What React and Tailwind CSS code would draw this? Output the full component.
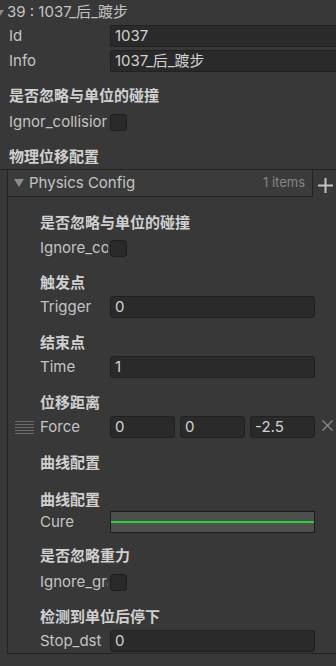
import React from 'react';

const labelCls = 'shrink-0 overflow-hidden whitespace-nowrap text-[15px] text-[#c4c4c4] leading-[22px]';
const fieldCls = 'h-[22px] rounded-[3px] border border-[#212121] bg-[#2a2a2a] pl-[4px] text-[15px] leading-[20px] text-[#d2d2d2] overflow-hidden whitespace-nowrap';

function Heading({ children, className }) {
  return (
    <div className={'h-[22px] font-bold text-[15px] leading-[22px] text-[#d0d0d0] ' + className}>
      {children}
    </div>
  );
}

function Checkbox() {
  return <div className="h-[17px] w-[17px] rounded-[3px] border border-[#1f1f1f] bg-[#2a2a2a]" />;
}

function Row({ label, labelW, children, className }) {
  return (
    <div className={'flex h-[22px] items-center ' + className}>
      <div className={labelCls + ' ' + labelW}>{label}</div>
      {children}
    </div>
  );
}

export default function App() {
  return (
    <div className="h-[666px] w-[336px] overflow-hidden bg-[#383838] font-[family-name:Inter,'Noto_Sans_CJK_SC',sans-serif]">
      {/* object title */}
      <div className="flex h-[25px] items-center">
        <svg width="4" height="8" viewBox="0 0 4 8" className="mt-[1px]">
          <path d="M-4 1 L4 1 L0 7 Z" fill="#8c8c8c" />
        </svg>
        <span className="ml-[3px] text-[15px] text-[#c4c4c4]">39 : 1037_后_踱步</span>
      </div>

      <div className="pl-[9px]">
        <Row label="Id" labelW="w-[101px]">
          <div className={fieldCls + ' flex-1 border-r-0 rounded-r-none'}>1037</div>
        </Row>
        <Row label="Info" labelW="w-[101px]" className="mt-[3px]">
          <div className={fieldCls + ' flex-1 border-r-0 rounded-r-none'}>1037_后_踱步</div>
        </Row>

        <Heading className="mt-[13px]">是否忽略与单位的碰撞</Heading>
        <Row label="Ignor_collisior" labelW="w-[98px] mr-[3px]" className="mt-[4px]">
          <Checkbox />
        </Row>

        <Heading className="mt-[13px]">物理位移配置</Heading>
      </div>

      {/* list header */}
      <div className="mt-[1px] flex h-[28px] border-t border-[#232323] pl-[7px]">
        <div className="flex w-[306px] items-center border-b border-l border-r border-[#232323] bg-[#3b3b3b]">
          <svg width="10" height="8" viewBox="0 0 10 8" className="ml-[6px]">
            <path d="M0 0 L10 0 L5 8 Z" fill="#8c8c8c" />
          </svg>
          <span className="ml-[5px] text-[15px] text-[#c4c4c4]">Physics Config</span>
          <span className="ml-auto mr-[7px] text-[13px] text-[#858585]">1 items</span>
        </div>
        <div className="flex flex-1 items-center justify-center pl-[1px] pt-[3px]">
          <svg width="15" height="15" viewBox="0 0 15 15">
            <path d="M7.5 0 V15 M0 7.5 H15" stroke="#c2c2c2" strokeWidth="2" />
          </svg>
        </div>
      </div>

      {/* list body */}
      <div className="ml-[7px] h-[457px] border-b border-l border-[#232323] pl-[32px] pt-[15px]">
        <Heading>是否忽略与单位的碰撞</Heading>
        <Row label="Ignore_co" labelW="w-[68px] mr-[2px]" className="mt-[3px]">
          <Checkbox />
        </Row>

        <Heading className="mt-[13px]">触发点</Heading>
        <Row label="Trigger" labelW="w-[70px]" className="mt-[2px]">
          <div className={fieldCls + ' w-[205px]'}>0</div>
        </Row>

        <Heading className="mt-[14px]">结束点</Heading>
        <Row label="Time" labelW="w-[70px]" className="mt-[2px]">
          <div className={fieldCls + ' w-[205px]'}>1</div>
        </Row>

        <Heading className="mt-[14px]">位移距离</Heading>
        <div className="relative mt-[2px] flex h-[22px] items-center">
          <svg width="19" height="14" viewBox="0 0 19 14" className="absolute left-[-25px] top-[5px]">
            <path d="M0 0.5 H19 M0 3.5 H19 M0 6.5 H19 M0 9.5 H19 M0 12.5 H19" stroke="#6c6c6c" strokeWidth="1" />
          </svg>
          <div className={labelCls + ' w-[70px]'}>Force</div>
          <div className="flex w-[205px] gap-[5px]">
            <div className={fieldCls + ' w-[65px]'}>0</div>
            <div className={fieldCls + ' w-[65px]'}>0</div>
            <div className={fieldCls + ' w-[65px]'}>-2.5</div>
          </div>
          <svg width="11" height="11" viewBox="0 0 11 11" className="ml-[7px] mt-[-4px]">
            <path d="M0.5 0.5 L10.5 10.5 M10.5 0.5 L0.5 10.5" stroke="#8a8a8a" strokeWidth="1.3" />
          </svg>
        </div>

        <Heading className="mt-[14px]">曲线配置</Heading>
        <Heading className="mt-[15px]">曲线配置</Heading>
        <Row label="Cure" labelW="w-[70px]">
          <div className="flex h-[22px] w-[205px] items-center border border-[#1c1c1c] bg-[#4e4e4e]">
            <div className="h-[2px] w-full bg-[#27d42b]" />
          </div>
        </Row>

        <Heading className="mt-[12px]">是否忽略重力</Heading>
        <Row label="Ignore_gra" labelW="w-[68px] mr-[2px]" className="mt-[4px]">
          <Checkbox />
        </Row>

        <Heading className="mt-[13px]">检测到单位后停下</Heading>
        <Row label="Stop_dst" labelW="w-[70px]" className="mt-[2px]">
          <div className={fieldCls + ' w-[205px]'}>0</div>
        </Row>
      </div>
    </div>
  );
}
